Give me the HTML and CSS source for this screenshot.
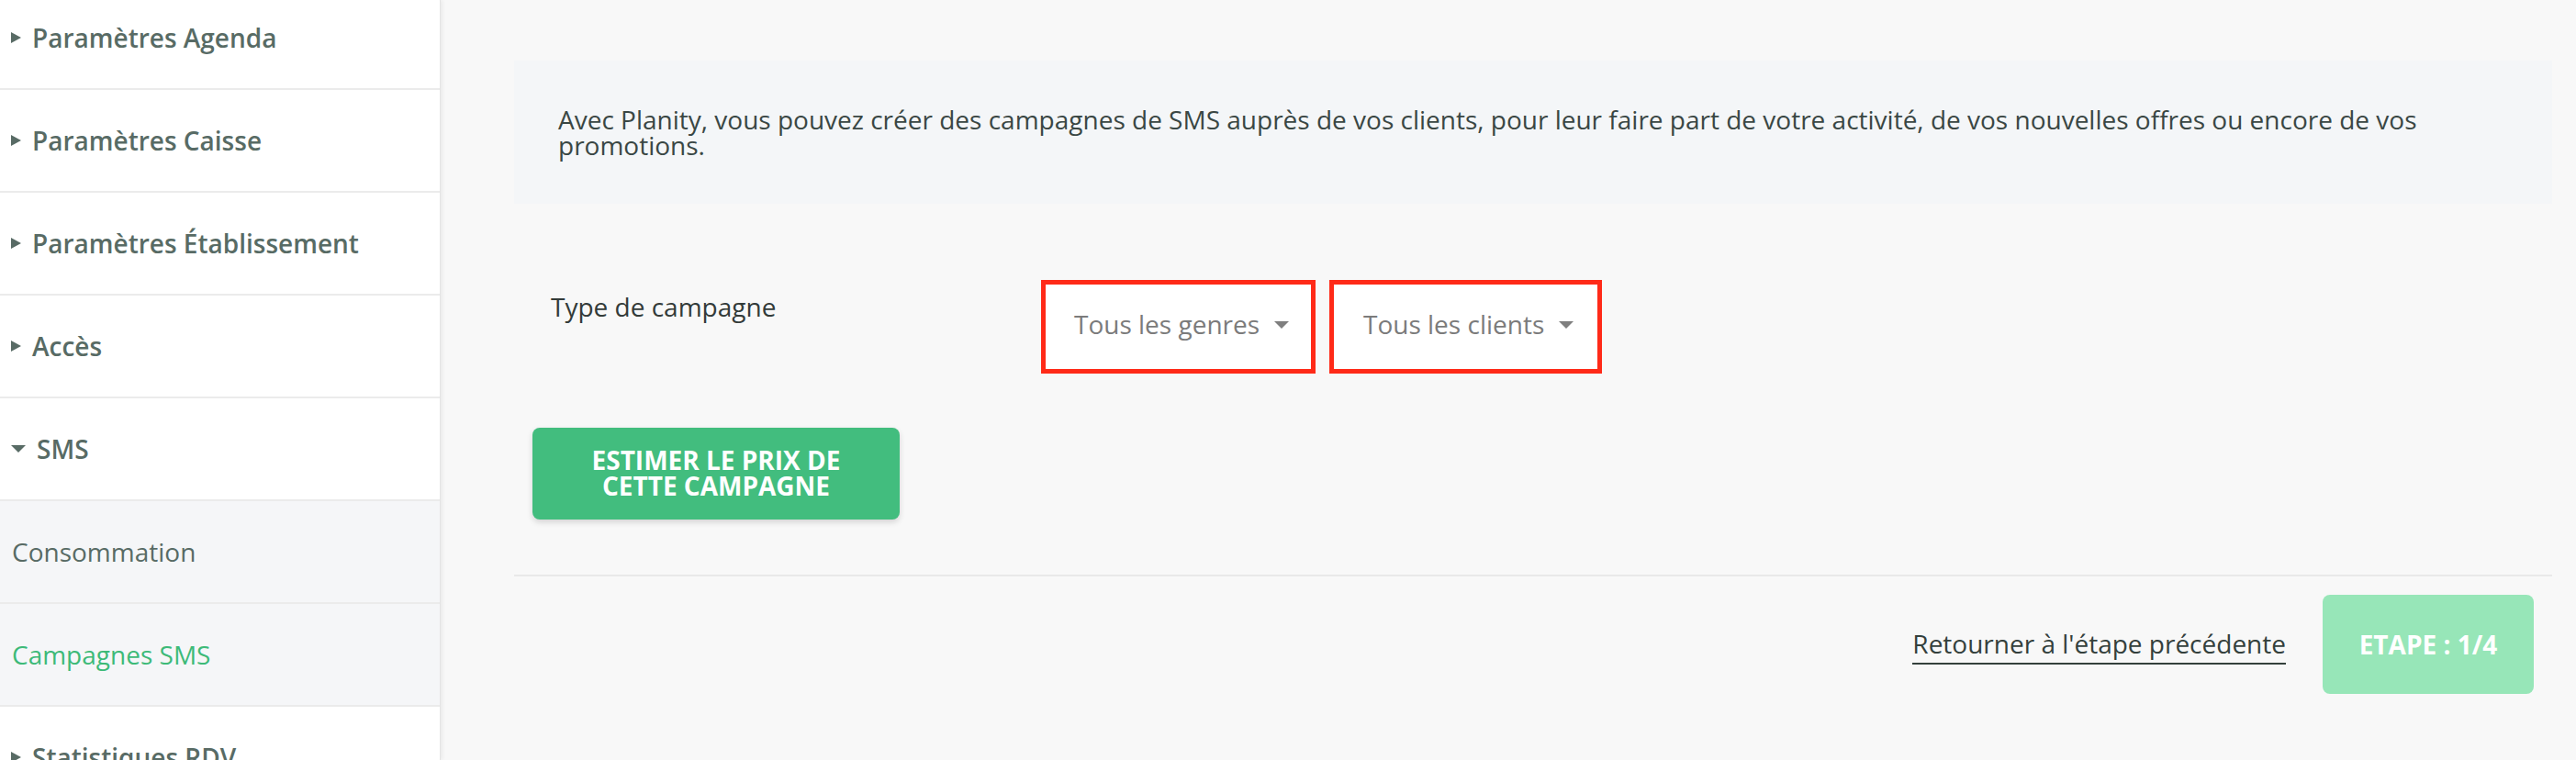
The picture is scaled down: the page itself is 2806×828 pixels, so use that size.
FILE: index.html
```html
<!DOCTYPE html>
<html lang="fr">
  <head>
    <meta charset="UTF-8" />
    <meta name="viewport" content="width=device-width, initial-scale=1.0" />
    <title>Campagnes SMS</title>
    <link rel="stylesheet" href="styles.css">
  </head>
  <body>
    <div class="layout">
      <aside class="sidebar">
        <ul class="nav">
          <li class="nav-item"><span class="caret caret-right"></span>Paramètres Agenda</li>
          <li class="nav-item"><span class="caret caret-right"></span>Paramètres Caisse</li>
          <li class="nav-item"><span class="caret caret-right"></span>Paramètres Établissement</li>
          <li class="nav-item"><span class="caret caret-right"></span>Accès</li>
          <li class="nav-item open"><span class="caret caret-down"></span>SMS</li>
          <li class="nav-sub">Consommation</li>
          <li class="nav-sub active">Campagnes SMS</li>
          <li class="nav-item"><span class="caret caret-right"></span>Statistiques RDV</li>
        </ul>
      </aside>

      <main class="content">
        <div class="intro">
          Avec Planity, vous pouvez créer des campagnes de SMS auprès de vos clients, pour leur faire part de votre activité, de vos nouvelles offres ou encore de vos promotions.
        </div>

        <div class="field-row">
          <label class="field-label">Type de campagne</label>
          <div class="selects">
            <div class="select">Tous les genres <span class="select-caret"></span></div>
            <div class="select select-clients">Tous les clients <span class="select-caret"></span></div>
          </div>
        </div>

        <button class="btn-estimate">Estimer le prix de cette campagne</button>

        <div class="footer">
          <a class="back-link">Retourner à l'étape précédente</a>
          <button class="btn-step">Etape : 1/4</button>
        </div>
      </main>
    </div>
  </body>
</html>
```

FILE: styles.css
```css
* {
  box-sizing: border-box;
}
body {
  margin: 0;
  height: 828px;
  overflow: hidden;
  font-family: "Open Sans", "Liberation Sans", sans-serif;
  background: #f8f8f8;
}
.layout {
  display: flex;
  height: 100%;
}

/* sidebar */
.sidebar {
  width: 480px;
  flex-shrink: 0;
  background: white;
  border-right: 1px solid #e4e4e4;
  box-shadow: 2px 0 4px rgba(0, 0, 0, 0.06);
  position: relative;
  z-index: 1;
}
.nav {
  list-style: none;
  margin: -14px 0 0 0;
  padding: 0;
}
.nav-item,
.nav-sub {
  height: 112px;
  display: flex;
  align-items: center;
  border-bottom: 2px solid #ebebeb;
  font-size: 28px;
  color: #586b65;
}
.nav-item {
  font-weight: 600;
  padding-left: 12px;
}
.nav-sub {
  background: #f5f6f8;
  padding-left: 13px;
}
.nav-sub.active {
  color: #3dba78;
}
.caret {
  display: inline-block;
  width: 0;
  height: 0;
}
.caret-right {
  border-left: 11px solid #586b65;
  border-top: 6.5px solid transparent;
  border-bottom: 6.5px solid transparent;
  margin-right: 12px;
}
.caret-down {
  border-top: 8px solid #586b65;
  border-left: 8px solid transparent;
  border-right: 8px solid transparent;
  margin-right: 12px;
}

/* main area */
.content {
  flex: 1;
  padding: 66px 26px 0 80px;
}
.intro {
  background: #f4f6f8;
  padding: 50px 48px;
  font-size: 28px;
  line-height: 28px;
  color: #3a4744;
}
.field-row {
  display: flex;
  margin-top: 83px;
  padding-left: 40px;
}
.field-label {
  width: 534px;
  padding-top: 15px;
  font-size: 28px;
  line-height: 28px;
  color: #333b39;
}
.selects {
  display: flex;
  gap: 15px;
}
.select {
  width: 299px;
  height: 102px;
  border: 5px solid #ff2a18;
  background: white;
  padding: 29px 0 0 31px;
  font-size: 28px;
  line-height: 28px;
  color: #7b7b7b;
  display: flex;
  align-items: flex-start;
  gap: 16px;
}
.select-clients {
  width: 297px;
  padding-left: 32px;
}
.select-caret {
  display: inline-block;
  width: 0;
  height: 0;
  margin-top: 11px;
  border-top: 8px solid #7f7f7f;
  border-left: 8px solid transparent;
  border-right: 8px solid transparent;
}
.btn-estimate {
  display: block;
  margin: 59px 0 0 20px;
  width: 400px;
  height: 100px;
  padding: 0 40px 2px;
  border: none;
  border-radius: 8px;
  background: #42bd7e;
  box-shadow: 0 3px 6px rgba(0, 0, 0, 0.15);
  color: white;
  font-family: inherit;
  font-size: 28px;
  font-weight: 700;
  line-height: 28px;
  text-transform: uppercase;
}
.footer {
  margin-top: 60px;
  border-top: 2px solid #e9e9e9;
  padding: 20px 20px 0 0;
  display: flex;
  justify-content: flex-end;
  align-items: flex-start;
  gap: 40px;
}
.back-link {
  margin-top: 39px;
  padding-bottom: 7px;
  border-bottom: 2px solid #34403c;
  font-size: 28px;
  line-height: 28px;
  color: #34403c;
  cursor: pointer;
}
.btn-step {
  width: 230px;
  height: 108px;
  border: none;
  border-radius: 8px;
  background: #97e6b8;
  color: white;
  font-family: inherit;
  font-size: 28px;
  font-weight: 700;
  text-transform: uppercase;
}
```
